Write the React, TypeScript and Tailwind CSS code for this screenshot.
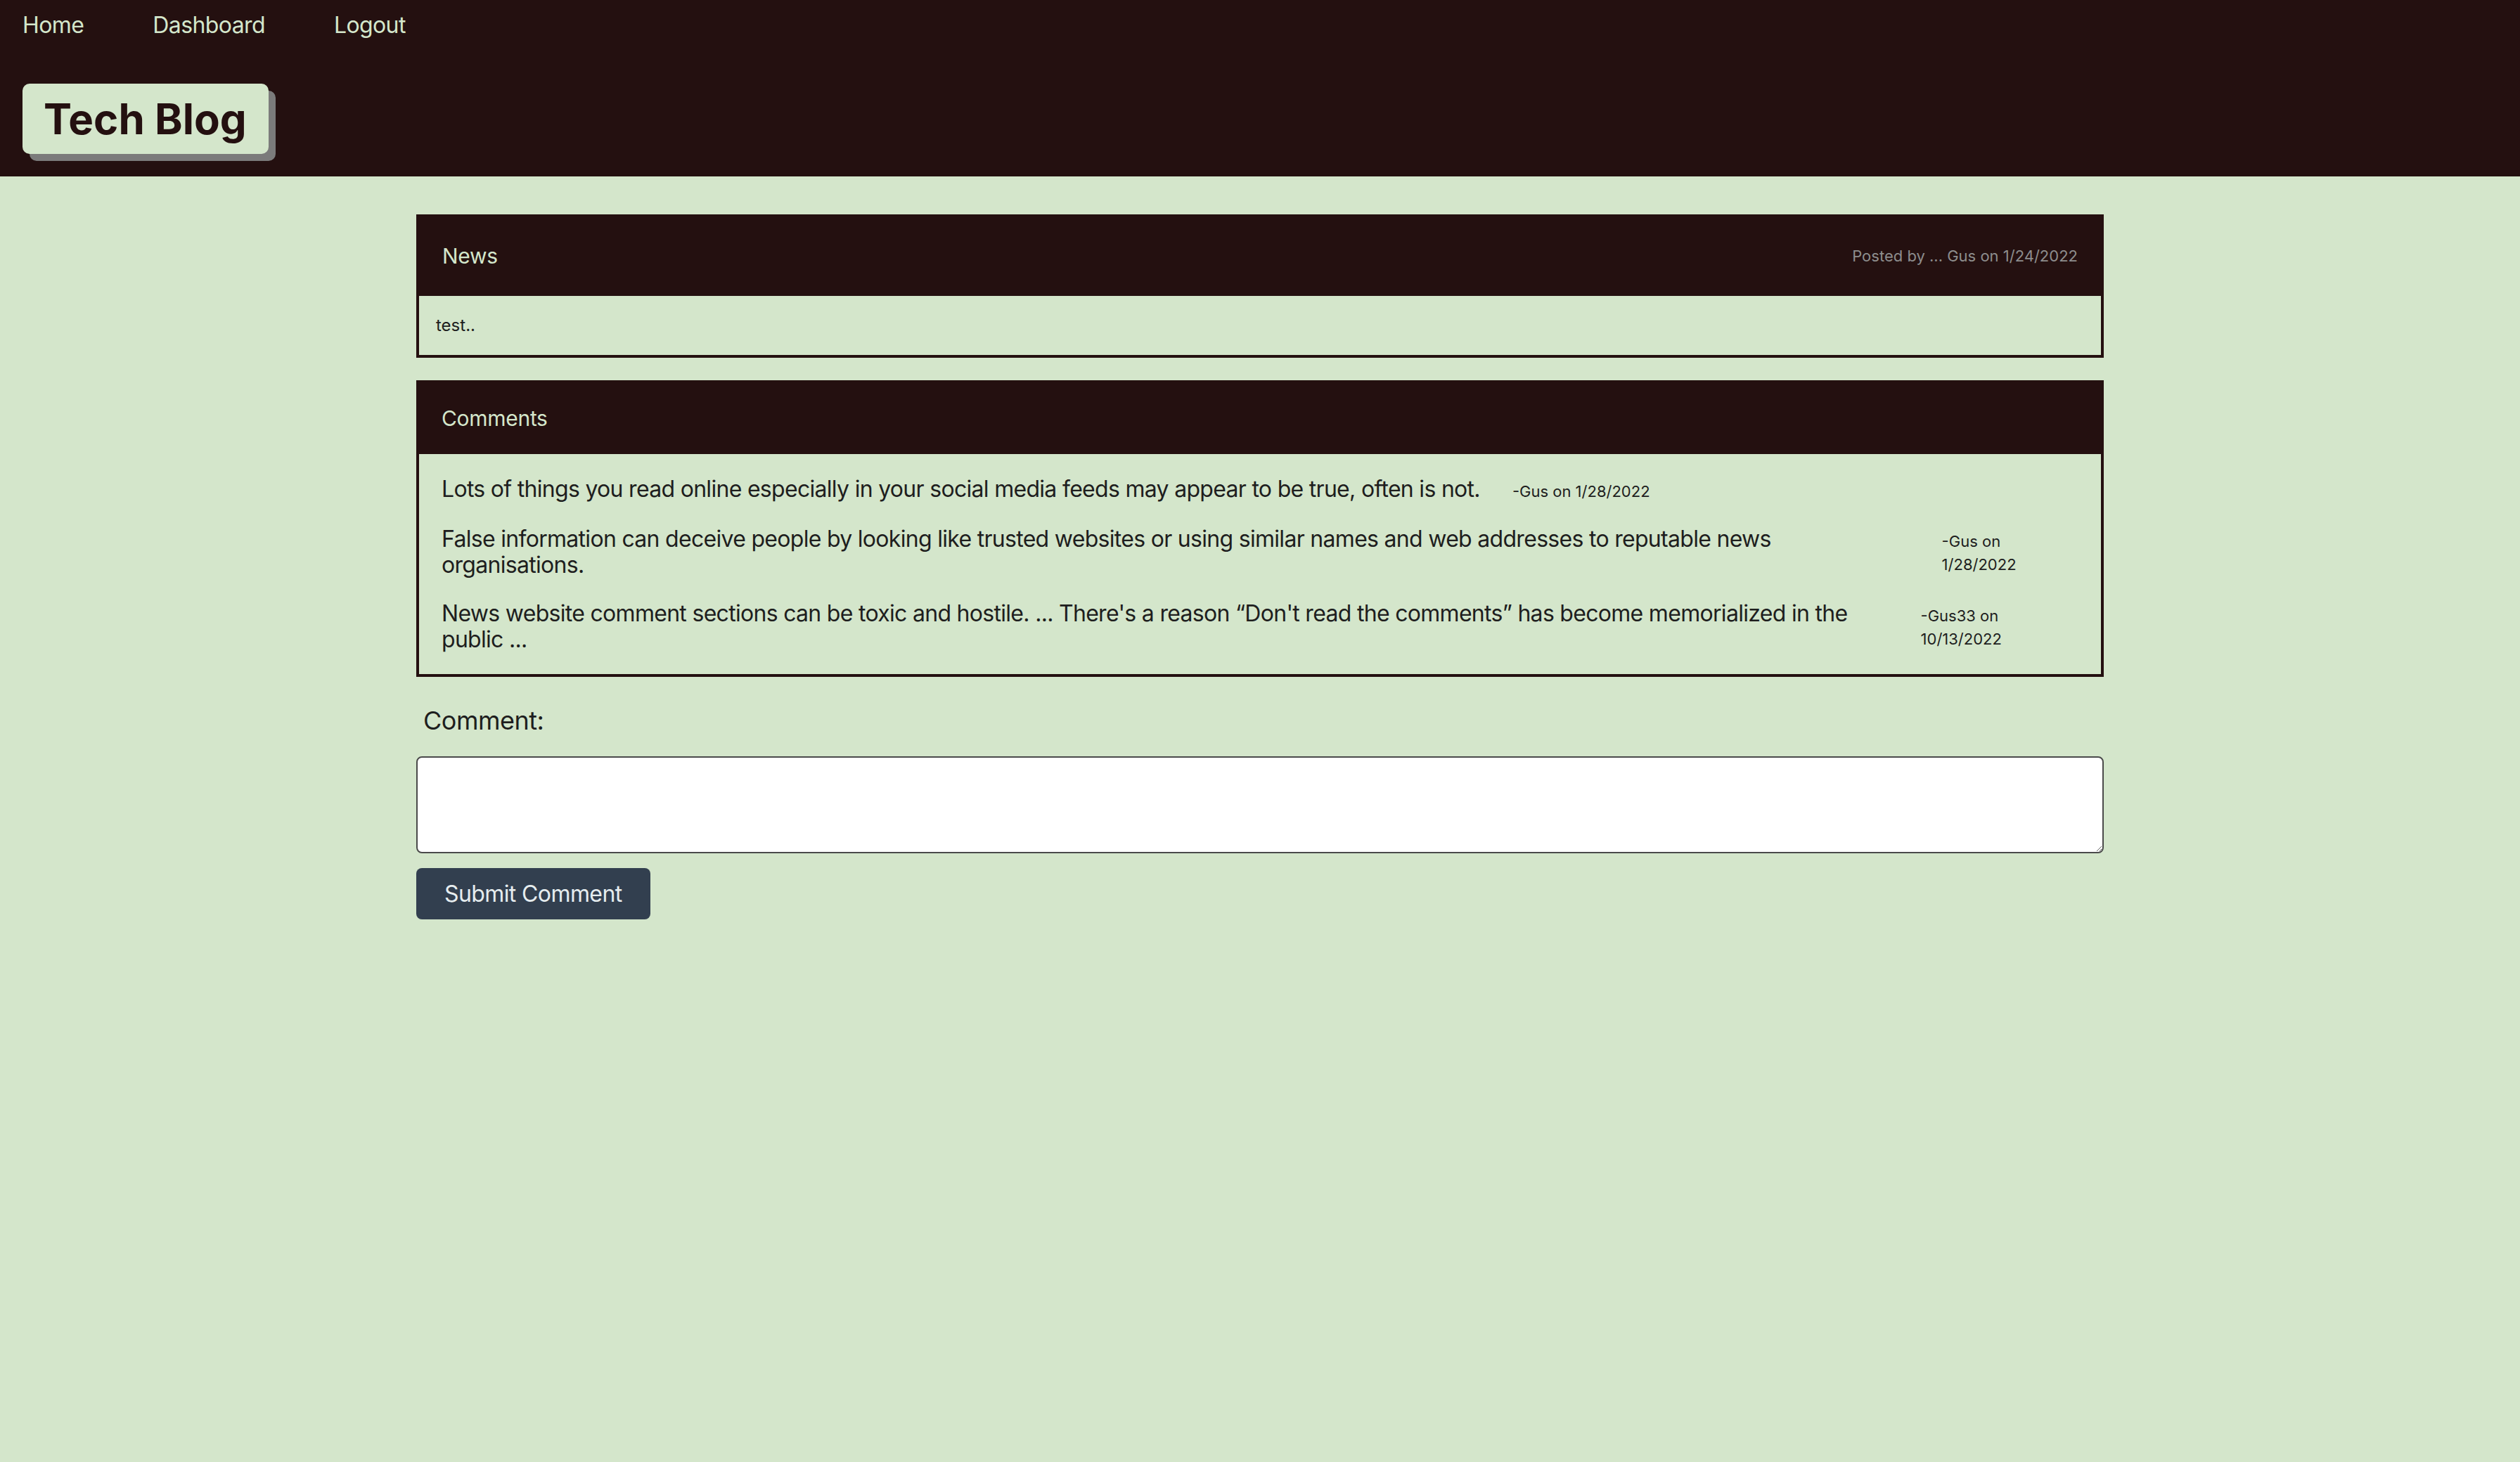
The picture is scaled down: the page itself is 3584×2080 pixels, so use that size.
import React from "react";

const comments = [
  {
    text: "Lots of things you read online especially in your social media feeds may appear to be true, often is not.",
    author: "-Gus on 1/28/2022",
  },
  {
    text: "False information can deceive people by looking like trusted websites or using similar names and web addresses to reputable news organisations.",
    author: "-Gus on 1/28/2022",
  },
  {
    text: "News website comment sections can be toxic and hostile. ... There's a reason \u201cDon't read the comments\u201d has become memorialized in the public ...",
    author: "-Gus33 on 10/13/2022",
  },
];

export default function App() {
  return (
    <div className="min-h-screen bg-[#d4e6cb] font-['Inter','Liberation_Sans',sans-serif] text-[#1e1e1e]">
      <header className="h-[251px] bg-[#241010] px-[32px] pt-[16px]">
        <nav className="flex gap-[98px] text-[32px] leading-[40px] tracking-[-0.6px] text-[#d4e6cb]">
          <a href="#">Home</a>
          <a href="#">Dashboard</a>
          <a href="#">Logout</a>
        </nav>
        <div className="mt-[63px] flex h-[100px] w-[350px] items-center rounded-[10px] bg-[#d4e6cb] pl-[30px] shadow-[10px_10px_0_#7b7b7b]">
          <h1 className="whitespace-nowrap text-[60px] font-bold leading-none tracking-[0px] text-[#241010]">Tech Blog</h1>
        </div>
      </header>

      <main className="mx-auto w-[2400px] pt-[54px]">
        <section className="border-4 border-[#241010]">
          <div className="flex h-[112px] items-center justify-between bg-[#241010] px-[33px] pb-[2px]">
            <h2 className="text-[30px] tracking-[-0.3px] text-[#d4e6cb]">News</h2>
            <span className="text-[22px] text-[#8d8d8d]">Posted by ... Gus on 1/24/2022</span>
          </div>
          <div className="flex h-[84px] items-center px-[24px]">
            <p className="text-[24px]">test..</p>
          </div>
        </section>

        <section className="mt-[32px] border-4 border-[#241010]">
          <div className="flex h-[101px] items-center bg-[#241010] px-[32px]">
            <h2 className="text-[30px] tracking-[-0.3px] text-[#d4e6cb]">Comments</h2>
          </div>
          <div className="flex flex-col gap-[32px] px-[32px] py-[31px]">
            {comments.map((c, i) => (
              <div key={i} className="flex items-baseline">
                <p className="text-[32px] leading-[37px] tracking-[-0.7px]">{c.text}</p>
                <span className="ml-[46px] text-[22px] leading-[33px]">{c.author}</span>
              </div>
            ))}
          </div>
        </section>

        <label className="ml-[10px] mt-[40px] block text-[36px] leading-[44px] tracking-[-0.5px]">Comment:</label>
        <textarea className="mt-[29px] block h-[138px] w-full rounded-[8px] border-2 border-[#4a4a4a] bg-white p-[8px] text-[32px]" />
        <button className="mt-[21px] h-[73px] rounded-[8px] bg-[#323f4f] px-[40px] text-[32px] tracking-[-0.6px] text-[#e6edef]">
          Submit Comment
        </button>
      </main>
    </div>
  );
}
